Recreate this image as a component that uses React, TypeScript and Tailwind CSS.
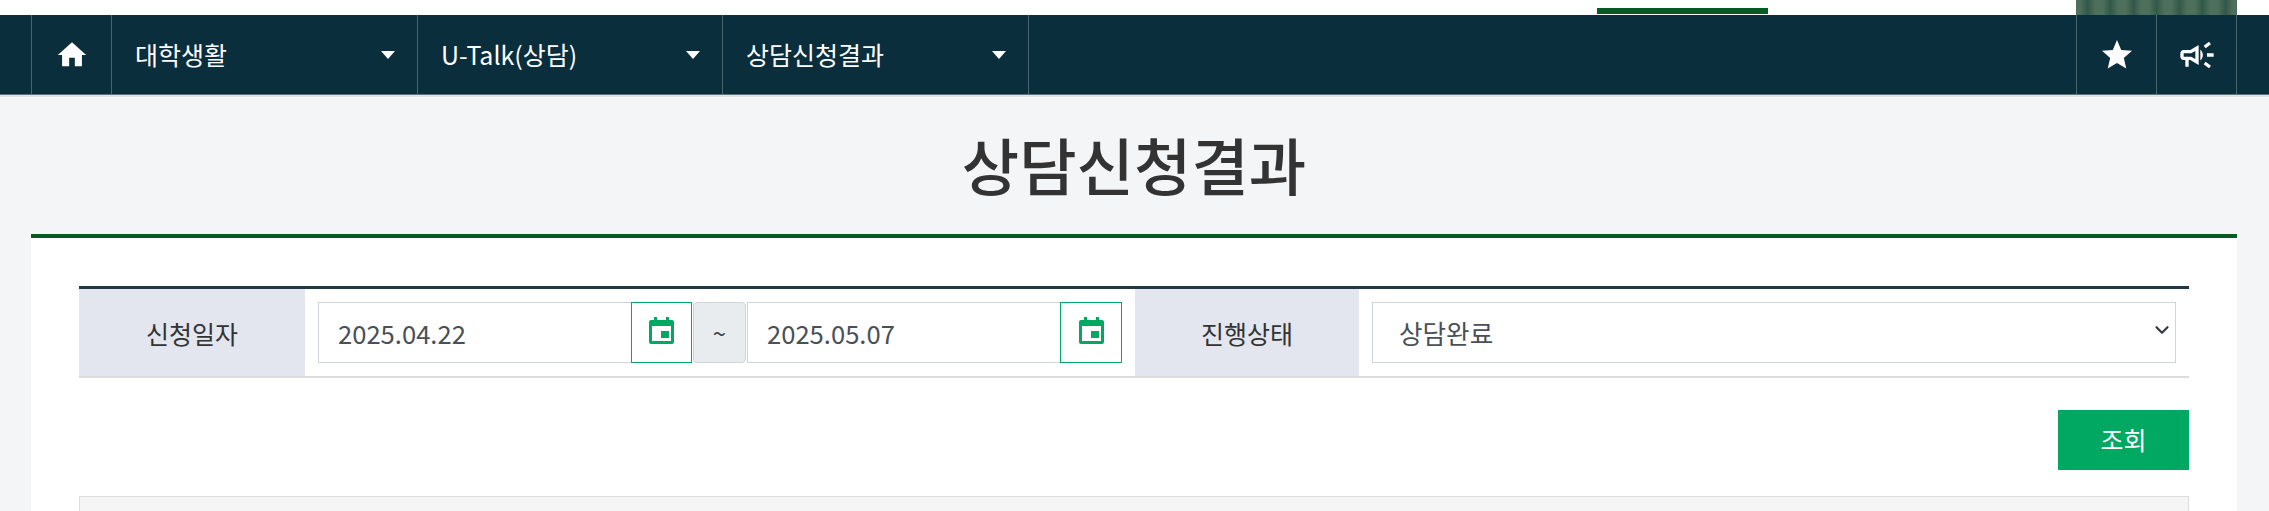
import { MdHome, MdStar, MdOutlineCampaign } from 'react-icons/md'
import { ChevronDown } from 'lucide-react'

const font = "font-['Noto_Sans_CJK_KR','Noto_Sans',sans-serif]"

function NavMenu({ label, width }: { label: string; width: string }) {
    return (
        <div className={`${width} flex items-center justify-between border-r border-[#4a6570] pl-[23px] pr-[22px] text-white text-[25px]`}>
            <span>{label}</span>
            <span className="w-0 h-0 border-x-[7px] border-x-transparent border-t-[8px] border-t-white" />
        </div>
    )
}

function CalendarIcon() {
    return (
        <svg width="25" height="27" viewBox="0 0 25 27" className="text-[#00a862]">
            <path fill="currentColor" d="M5 0h3v3h9V0h3v3h3a2 2 0 0 1 2 2v20a2 2 0 0 1-2 2H2a2 2 0 0 1-2-2V5a2 2 0 0 1 2-2h3z" />
            <rect x="3" y="9" width="19" height="15" fill="#ffffff" />
            <rect x="12" y="14" width="8" height="7" fill="currentColor" />
        </svg>
    )
}

function DateInput({ value, btn }: { value: string; btn: string }) {
    return (
        <div className="flex h-[61px]">
            <div className="w-[314px] flex items-center border border-[#ced4da] pl-[19px] pt-[2px] text-[25.6px] text-[#495057]">{value}</div>
            <button className={`${btn} -ml-px pb-[4px] flex items-center justify-center border border-[#00a862] bg-white`}>
                <CalendarIcon />
            </button>
        </div>
    )
}

export default function App() {
    return (
        <div className={`${font} h-[511px] overflow-hidden bg-[#f4f5f7]`}>
            <div className="h-[15px] bg-white flex">
                <div className="w-[1597px]" />
                <div className="w-[171px] h-[6px] mt-[8px] bg-[#065a22]" />
                <div className="w-[308px]" />
                <div className="w-[161px] bg-[repeating-linear-gradient(90deg,#4d6f5b_0,#4d6f5b_4px,#33584a_11.5px,#4d6f5b_19px,#4d6f5b_23px)]" />
            </div>
            <nav className="h-[80px] bg-[#0b2e3c] pl-[31px] pr-[32px] flex border-b border-[#5d7480]">
                <div className="w-[81px] flex items-center justify-center border-x border-[#4a6570]">
                    <MdHome className="text-white" size={34} />
                </div>
                <NavMenu label="대학생활" width="w-[306px]" />
                <NavMenu label="U-Talk(상담)" width="w-[305px]" />
                <NavMenu label="상담신청결과" width="w-[306px]" />
                <div className="flex-1" />
                <div className="w-[81px] flex items-center justify-center border-x border-[#4a6570]">
                    <MdStar className="text-white" size={36} />
                </div>
                <div className="w-[80px] flex items-center justify-center border-r border-[#4a6570]">
                    <MdOutlineCampaign className="text-white" size={40} />
                </div>
            </nav>
            <div className="h-[2px] bg-[#e2e3e5]" />
            <main className="pl-[31px] pr-[32px]">
                <h1 className="h-[137px] pb-[2px] flex items-center justify-center text-[62.4px] font-medium text-[#333333]">상담신청결과</h1>
                <div className="border-t-4 border-[#065a22] bg-white h-[300px] px-[48px] pt-[48px]">
                    <div className="border-t-[3px] border-b-2 border-t-[#203a45] border-b-[#dddddd] h-[92px] flex text-[#333333]">
                        <div className="w-[226px] pt-[2px] bg-[#e3e6ee] flex items-center justify-center text-[25px]">신청일자</div>
                        <div className="flex items-center pl-[13px]">
                            <DateInput value="2025.04.22" btn="w-[61px]" />
                            <div className="w-[53px] h-[61px] mx-px flex items-center justify-center rounded bg-[#e9ecef] border border-[#ced4da] text-[#3d444b] text-[24px]">~</div>
                            <DateInput value="2025.05.07" btn="w-[62px]" />
                        </div>
                        <div className="w-[224px] ml-[13px] pt-[2px] bg-[#e3e6ee] flex items-center justify-center text-[25px]">진행상태</div>
                        <div className="flex-1 flex items-center px-[13px]">
                            <div className="relative w-full">
                                <select className="appearance-none w-full h-[61px] border border-[#ced4da] bg-white pl-[26px] pr-2 pt-[2px] text-[25.6px] text-[#495057]">
                                    <option>상담완료</option>
                                </select>
                                <ChevronDown className="absolute right-[3px] top-[17px] text-[#343a40] pointer-events-none" size={22} strokeWidth={2.4} />
                            </div>
                        </div>
                    </div>
                    <div className="flex justify-end mt-[32px]">
                        <button className="w-[131px] h-[60px] bg-[#00a862] text-white text-[25px]">조회</button>
                    </div>
                    <div className="mt-[26px] h-[80px] bg-[#f5f5f5] border border-[#dddddd]" />
                </div>
            </main>
        </div>
    )
}
